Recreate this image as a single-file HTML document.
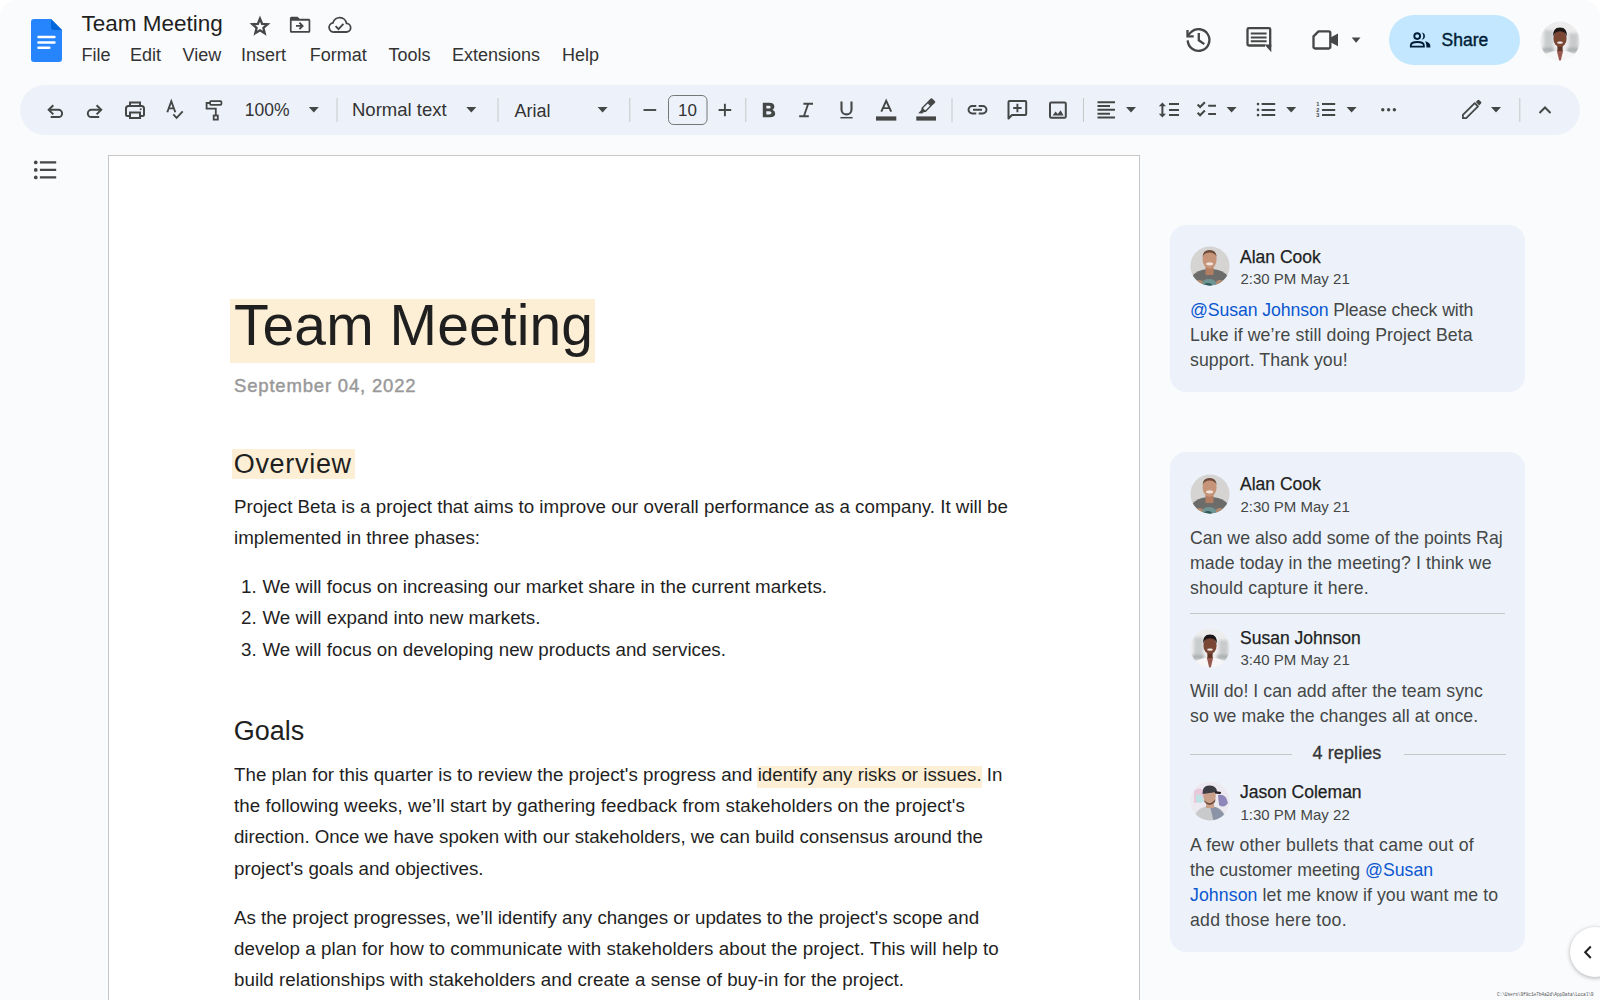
<!DOCTYPE html>
<html><head><meta charset="utf-8">
<style>
*{box-sizing:border-box;margin:0;padding:0}
html,body{width:1600px;height:1000px;overflow:hidden;background:#f9fbfd;font-family:"Liberation Sans",sans-serif;color:#1f1f1f}
.a{position:absolute;white-space:nowrap;line-height:1}
svg{position:absolute;overflow:visible}
.ic{fill:none;stroke:#444746;stroke-width:2}
.f{fill:#444746;stroke:none}
.menu{font-size:18px;top:45.5px;color:#333}
.tb{position:absolute;left:20px;top:85px;width:1560px;height:50px;border-radius:25px;background:#edf2fa}
.sep{position:absolute;width:1px;top:98px;height:24px;background:#c7c7c7}
.dd{position:absolute;width:0;height:0;border-left:5px solid transparent;border-right:5px solid transparent;border-top:5px solid #444746}
.page{position:absolute;left:108px;top:155px;width:1032px;height:900px;background:#fff;border:1px solid #c7c7c7}
.p{position:absolute;left:234px;font-size:18.75px;line-height:31.3px;white-space:nowrap;color:#1f1f1f}
.hl{position:absolute;background:#fdefd5}
.card{position:absolute;left:1170px;width:355px;background:#edf2fa;border-radius:16px}
.nm{font-size:17.5px;left:1240px;color:#1f1f1f;-webkit-text-stroke:0.25px #1f1f1f}
.tm{font-size:15px;left:1240.5px;color:#444746}
.cb{position:absolute;left:1190px;font-size:17.7px;line-height:25px;white-space:nowrap;color:#444746}
.mn{color:#0b57d0}
.av{position:absolute;left:1190px;width:40px;height:40px;border-radius:50%;overflow:hidden}
.div{position:absolute;height:1px;background:#c4c7c5}
</style></head><body>

<!-- Docs logo -->
<svg style="left:31px;top:18.5px" width="31" height="43" viewBox="0 0 31 43">
  <path d="M3 0H20L31 11V40A3 3 0 0 1 28 43H3A3 3 0 0 1 0 40V3A3 3 0 0 1 3 0Z" fill="#2684fc"/>
  <path d="M20 0L31 11H23A3 3 0 0 1 20 8Z" fill="#0066da"/>
  <rect x="6.3" y="16.7" width="18.3" height="2.5" rx="1" fill="#fff"/>
  <rect x="6.3" y="22.2" width="18.3" height="2.5" rx="1" fill="#fff"/>
  <rect x="6.3" y="27.6" width="13.2" height="2.5" rx="1" fill="#fff"/>
</svg>

<div class="a" style="left:81.5px;top:13.4px;font-size:22.5px">Team Meeting</div>

<div class="a menu" style="left:81.5px">File</div>
<div class="a menu" style="left:130px">Edit</div>
<div class="a menu" style="left:182.5px">View</div>
<div class="a menu" style="left:241px">Insert</div>
<div class="a menu" style="left:309.8px">Format</div>
<div class="a menu" style="left:388.5px">Tools</div>
<div class="a menu" style="left:452px">Extensions</div>
<div class="a menu" style="left:562px">Help</div>

<!-- toolbar -->
<div class="tb"></div>


<!-- ICON OVERLAY -->
<svg style="left:0;top:0" width="1600" height="1000" viewBox="0 0 1600 1000">
<g class="ic" stroke-linecap="butt" stroke-linejoin="miter">
  <!-- star -->
  <path d="M260 18.6 L262.1 23.8 L267.6 24.2 L263.4 27.8 L264.7 33.2 L260 30.3 L255.3 33.2 L256.6 27.8 L252.4 24.2 L257.9 23.8 Z" stroke-width="2.3" stroke-linejoin="miter" stroke-miterlimit="10"/>
  <!-- folder move -->
  <path d="M296 25.9 H302.3 M299.4 22.7 L302.6 25.9 L299.4 29.1" stroke-width="1.9"/>
  <!-- cloud done -->
  <path d="M334.5 32 H346.2 A4.3 4.3 0 0 0 346.5 23.4 A6.9 6.9 0 0 0 333 22.8 A4.6 4.6 0 0 0 334.5 32 Z" stroke-width="1.8"/>
  <path d="M335.6 26.1 L338.5 29.1 L343.4 23.9" stroke-width="1.9"/>
</g>
<g class="ic" stroke-width="1.8">
  <!-- undo -->
  <path d="M48.8 109.8 H58.5 A3.6 3.6 0 0 1 58.5 117 H50.7"/>
  <path d="M53.3 105.2 L48.7 109.8 L53.3 114.4"/>
  <!-- redo -->
  <path d="M101.1 109.8 H91.4 A3.6 3.6 0 0 0 91.4 117 H99.2"/>
  <path d="M96.6 105.2 L101.2 109.8 L96.6 114.4"/>
  <!-- print -->
  <path d="M130 106 V102.5 H140 V106" stroke-width="2"/>
  <path d="M129.5 116 H127.5 A1.5 1.5 0 0 1 126 114.5 V108.5 A2.5 2.5 0 0 1 128.5 106 H141.5 A2.5 2.5 0 0 1 144 108.5 V114.5 A1.5 1.5 0 0 1 142.5 116 H140.5" stroke-width="2"/>
  <rect x="130" y="112.5" width="10" height="5.5" stroke-width="2"/>
  <!-- spellcheck -->
  <path d="M167.3 112.2 L171.3 101.2 L175.3 112.2 M168.7 108.4 H173.9" stroke-width="1.9"/>
  <path d="M173.3 114.4 L176.6 117.8 L182.7 111.3" stroke-width="1.9"/>
  <!-- paint format -->
  <rect x="210.1" y="101.2" width="11.3" height="3.6" rx="0.8" stroke-width="1.8"/>
  <path d="M210.1 103 H206.6 V108.7 H215.8 V115" stroke-width="1.8"/>
  <rect x="213.7" y="115.5" width="4.1" height="4.1" stroke-width="1.8"/>
  <!-- minus / plus -->
  <path d="M643.5 110 H656.2" stroke-width="1.9"/>
  <path d="M718.6 110 H731.2 M724.9 103.7 V116.3" stroke-width="1.9"/>
  <!-- italic -->
  <path d="M803.4 103.8 H813 M799.2 116.3 H808.8 M808.2 103.8 L803.9 116.3" stroke-width="1.9"/>
  <!-- underline -->
  <path d="M841.5 101.5 V109.4 A5 5 0 0 0 851.5 109.4 V101.5" stroke-width="2.1"/>
  <path d="M840.4 117.7 H852.6" stroke-width="1.5"/>
  <!-- text color A -->
  <path d="M881.3 111.7 L886.2 100.9 L891.2 111.7 M882.9 108.1 H889.6" stroke-width="1.95"/>
  <!-- link -->
  <path d="M976.3 106 H972.3 A3.75 3.75 0 0 0 972.3 113.5 H976.3 M978.7 106 H982.7 A3.75 3.75 0 0 1 982.7 113.5 H978.7 M973 109.75 H982" stroke-width="2"/>
  <!-- comment add -->
  <path d="M1008.5 118.5 V102 A1 1 0 0 1 1009.5 101 H1025.2 A1 1 0 0 1 1026.2 102 V114 A1 1 0 0 1 1025.2 115 H1012 Z" stroke-width="2" stroke-linejoin="round"/>
  <path d="M1017.4 103.8 V112.2 M1013.2 108 H1021.6" stroke-width="1.9"/>
  <!-- image -->
  <rect x="1050" y="102.5" width="15.8" height="15.3" rx="1.3" stroke-width="2"/>
  <!-- align left -->
  <path d="M1097.5 102.2 H1115 M1097.5 106 H1110 M1097.5 109.8 H1115 M1097.5 113.7 H1110 M1097.5 117.6 H1115" stroke-width="2"/>
  <!-- line spacing -->
  <path d="M1162.4 105 V115" stroke-width="2"/>
  <path d="M1169 104.1 H1179 M1169 109.9 H1179 M1169 115.1 H1179" stroke-width="2"/>
  <!-- checklist -->
  <path d="M1197.6 104.6 L1200.1 107 L1204.9 102.2 M1197.6 112.8 L1200.1 115.3 L1204.9 110.5" stroke-width="2.1"/>
  <path d="M1208.2 105.7 H1216 M1208.2 113.9 H1216" stroke-width="2"/>
  <!-- bulleted -->
  <path d="M1261.6 104.1 H1275.2 M1261.6 109.9 H1275.2 M1261.6 115.1 H1275.2" stroke-width="2"/>
  <!-- numbered -->
  <path d="M1322 104.1 H1335.2 M1322 109.9 H1335.2 M1322 115.1 H1335.2" stroke-width="2"/>
  <!-- pencil -->
  <path d="M1462.9 118.2 V114.9 L1474.7 103.1 L1478 106.4 L1466.2 118.2 Z" stroke-width="1.8" stroke-linejoin="round"/>
  <!-- caret up -->
  <path d="M1539.5 113 L1545 107.5 L1550.5 113" stroke-width="2"/>
  <!-- history -->
  <path d="M1187.7 40.4 A10.85 10.85 0 1 0 1190.9 32.3 L1187.6 35.7" stroke-width="2.3"/>
  <path d="M1187.5 29.9 V36.3 H1193.7" stroke-width="2.3"/>
  <path d="M1198.8 33.1 V40.3 L1204.3 44.1" stroke-width="2.3"/>
  <!-- comments header -->
  <path d="M1265 45.5 H1248.8 A1.3 1.3 0 0 1 1247.5 44.2 V29.4 A1.3 1.3 0 0 1 1248.8 28.1 H1268.9 A1.3 1.3 0 0 1 1270.2 29.4 V47" stroke-width="2.3"/>
  <path d="M1250.8 33.6 H1266.6 M1250.8 37.4 H1266.6 M1250.8 41.2 H1266.6" stroke-width="2"/>
  <!-- video -->
  <path d="M1318.5 31.4 H1328.8 A1.5 1.5 0 0 1 1330.3 32.9 V47 A1.5 1.5 0 0 1 1328.8 48.5 H1315 A1.5 1.5 0 0 1 1313.5 47 V36.4 Z" stroke-width="2.3" stroke-linejoin="round"/>
  <!-- outline icon -->
  <path d="M39.9 162.4 H56.2 M39.9 169.9 H56.2 M39.9 177.4 H56.2" stroke-width="2.3"/>
</g>
<g class="f">
  <path fill-rule="evenodd" d="M291.4 16.7 H297.6 L299.6 18.8 H308.8 A1.5 1.5 0 0 1 310.3 20.3 V31.3 A1.5 1.5 0 0 1 308.8 32.8 H291.4 A1.5 1.5 0 0 1 289.9 31.3 V18.2 A1.5 1.5 0 0 1 291.4 16.7 Z M291.6 20.7 V31.1 H308.6 V20.7 Z"/>
  <!-- print dot -->
  <circle cx="140.7" cy="109.3" r="1"/>
  <!-- line spacing arrows -->
  <path d="M1158.8 106.2 L1162.4 102.4 L1166 106.2 Z M1158.8 113.8 L1162.4 117.6 L1166 113.8 Z"/>
  <!-- bullets -->
  <circle cx="1258" cy="104.1" r="1.3"/><circle cx="1258" cy="109.9" r="1.3"/><circle cx="1258" cy="115.1" r="1.3"/>
  <!-- numbers -->
  <text x="1316.3" y="106.2" font-family="Liberation Sans" font-weight="700" font-size="5.6">1</text>
  <text x="1316.3" y="111.9" font-family="Liberation Sans" font-weight="700" font-size="5.6">2</text>
  <text x="1316.3" y="117.4" font-family="Liberation Sans" font-weight="700" font-size="5.6">3</text>
  <!-- more -->
  <circle cx="1382.8" cy="109.8" r="1.7"/><circle cx="1388.6" cy="109.8" r="1.7"/><circle cx="1394.4" cy="109.8" r="1.7"/>
  <!-- bold -->
  <path fill-rule="evenodd" d="M762.8 102.8 H769.3 Q774.4 102.8 774.4 106.7 Q774.4 108.9 772.5 109.8 Q775.2 110.7 775.2 113.5 Q775.2 117.3 770 117.3 H762.8 Z M766.3 105.7 V108.6 H768.9 Q770.7 108.6 770.7 107.15 Q770.7 105.7 768.9 105.7 Z M766.3 111.3 V114.4 H769.4 Q771.5 114.4 771.5 112.85 Q771.5 111.3 769.4 111.3 Z"/>
  <!-- color bars -->
  <rect x="876" y="116.4" width="20.3" height="4.2"/>
  <rect x="916.3" y="116.4" width="19.7" height="4.2"/>
  <!-- highlighter -->
  <g transform="rotate(45 926.5 107)">
    <rect x="923.5" y="97" width="6" height="5.6" rx="1"/>
    <path d="M923.5 102.3 H929.5 V111 L928 113 H925 L923.5 111 Z M924.9 103.6 V110.3 H928.1 V103.6 Z" fill-rule="evenodd"/>
    <path d="M925 112.5 H928 V114.6 L925 117.2 Z"/>
  </g>
  <!-- image mountains -->
  <path d="M1052.6 115.5 L1055.6 111.6 L1057.8 114 L1060.6 110.2 L1063.6 115.5 Z"/>
  <!-- pencil cap -->
  <path d="M1475.8 102 L1477.6 100.2 Q1478.5 99.3 1479.4 100.2 L1481 101.8 Q1481.9 102.7 1481 103.6 L1479.2 105.4 Z"/>
  <!-- comment tail -->
  <path d="M1264.5 44.4 H1271.3 V52.3 Z"/>
  <!-- video lens -->
  <path d="M1330.5 37.5 L1338 33.6 V46.2 L1330.5 42.3 Z"/>
  <!-- outline dots -->
  <circle cx="35.75" cy="162.4" r="1.85"/><circle cx="35.75" cy="169.9" r="1.85"/><circle cx="35.75" cy="177.4" r="1.85"/>
  <!-- dropdowns -->
  <path d="M308.8 107 H318.8 L313.8 112.5 Z"/>
  <path d="M466.3 107 H476.3 L471.3 112.5 Z"/>
  <path d="M597.6 107 H607.6 L602.6 112.5 Z"/>
  <path d="M1126 107 H1136 L1131 112.5 Z"/>
  <path d="M1226.6 107 H1236.6 L1231.6 112.5 Z"/>
  <path d="M1286.2 107 H1296.2 L1291.2 112.5 Z"/>
  <path d="M1346.6 107 H1356.6 L1351.6 112.5 Z"/>
  <path d="M1491 107 H1501 L1496 112.5 Z"/>
  <path d="M1351.7 37.6 H1360.5 L1356.1 42.8 Z"/>
</g>
<!-- separators -->
<g fill="#c7c7c7">
  <rect x="336.5" y="98" width="1" height="24"/>
  <rect x="497.5" y="98" width="1" height="24"/>
  <rect x="629.3" y="98" width="1" height="24"/>
  <rect x="745.3" y="98" width="1" height="24"/>
  <rect x="951.5" y="98" width="1" height="24"/>
  <rect x="1083" y="98" width="1" height="24"/>
  <rect x="1519.3" y="98" width="1" height="24"/>
</g>
<!-- font size box -->
<rect x="668.5" y="95.5" width="38.5" height="29" rx="5" fill="none" stroke="#747775" stroke-width="1"/>
<!-- share button -->
<rect x="1389" y="15" width="131" height="50" rx="25" fill="#c2e7ff"/>
<g fill="none" stroke="#001d35" stroke-width="2">
  <circle cx="1417.2" cy="36.1" r="2.9" stroke-width="1.9"/>
  <path d="M1410.8 46.7 V45.4 Q1410.8 42 1417.35 42 Q1423.9 42 1423.9 45.4 V46.7 Z" stroke-width="1.8"/>
</g>
<g fill="#001d35">
  <path d="M1421.8 32.4 A3.75 3.75 0 0 1 1421.8 39.8 A5.2 5.2 0 0 0 1421.8 32.4 Z"/>
  <path d="M1425.1 41.3 Q1430.3 42.4 1430.3 45.8 V47.6 H1426.4 V45.8 Q1426.4 43.3 1425.1 41.3 Z"/>
</g>
<!-- collapse button -->
<circle cx="1595" cy="952" r="25" fill="#fff" style="filter:drop-shadow(0 1px 2px rgba(0,0,0,0.3))"/>
<path d="M1590.8 946.5 L1585.2 952.3 L1590.8 958" fill="none" stroke="#1f1f1f" stroke-width="2"/>
</svg>
<div class="a" style="left:244.7px;top:101.6px;font-size:17.5px;color:#333">100%</div>
<div class="a" style="left:352px;top:101px;font-size:18.5px;color:#333">Normal text</div>
<div class="a" style="left:514.5px;top:101.5px;font-size:18px;color:#333">Arial</div>
<div class="a" style="left:678px;top:102px;font-size:17px;color:#333">10</div>
<div class="a" style="left:1441.6px;top:31.5px;font-size:17.5px;font-weight:400;color:#001d35;-webkit-text-stroke:0.4px #001d35">Share</div>

<!-- page -->
<div class="page"></div>

<!-- doc content -->
<div class="hl" style="left:230.25px;top:299px;width:364.75px;height:64px"></div>
<div class="a" style="left:234px;top:296.5px;font-size:57px;letter-spacing:0.08px;color:#1f1f1f">Team Meeting</div>
<div class="a" style="left:234px;top:377.8px;font-size:18.5px;font-weight:400;color:#999;letter-spacing:0.82px;-webkit-text-stroke:0.45px #999;top:377.3px">September 04, 2022</div>

<div class="hl" style="left:231.5px;top:448.5px;width:123.5px;height:30.5px"></div>
<div class="a" style="left:233.7px;top:451.2px;font-size:27px;letter-spacing:0.7px">Overview</div>

<div class="p" style="top:491.1px">Project Beta is a project that aims to improve our overall performance as a company. It will be<br>implemented in three phases:</div>

<div class="p" style="top:571px;left:241px">1.<br>2.<br>3.</div>
<div class="p" style="top:571px;left:262.5px">We will focus on increasing our market share in the current markets.<br>We will expand into new markets.<br>We will focus on developing new products and services.</div>

<div class="a" style="left:233.7px;top:717.65px;font-size:27px">Goals</div>

<div class="hl" style="left:756.6px;top:765.5px;width:225.9px;height:22px"></div>
<div class="p" style="top:758.8px">The plan for this quarter is to review the project's progress and identify any risks or issues. In<br><span style="letter-spacing:0.045px">the following weeks, we’ll start by gathering feedback from stakeholders on the project's</span><br><span style="letter-spacing:-0.054px">direction. Once we have spoken with our stakeholders, we can build consensus around the</span><br>project's goals and objectives.</div>

<div class="p" style="top:901.8px"><span style="letter-spacing:-0.03px">As the project progresses, we’ll identify any changes or updates to the project's scope and</span><br><span style="letter-spacing:0.058px">develop a plan for how to communicate with stakeholders about the project. This will help to</span><br><span style="letter-spacing:0.037px">build relationships with stakeholders and create a sense of buy-in for the project.</span></div>

<!-- comments -->
<div class="card" style="top:225px;height:167px"></div>
<div class="card" style="top:452px;height:500px"></div>

<div class="a nm" style="top:248.6px">Alan Cook</div>
<div class="a tm" style="top:271px">2:30 PM May 21</div>
<div class="cb" style="top:298.2px"><span style="letter-spacing:-0.1px"><span class="mn">@Susan Johnson</span> Please check with</span><br><span style="letter-spacing:0.09px">Luke if we’re still doing Project Beta</span><br><span style="letter-spacing:0.09px">support. Thank you!</span></div>

<div class="a nm" style="top:476.1px">Alan Cook</div>
<div class="a tm" style="top:498.6px">2:30 PM May 21</div>
<div class="cb" style="top:525.6px">Can we also add some of the points Raj<br><span style="letter-spacing:0.1px">made today in the meeting? I think we</span><br><span style="letter-spacing:0.17px">should capture it here.</span></div>
<div class="div" style="left:1190px;top:612.5px;width:315px"></div>

<div class="a nm" style="top:630.3px">Susan Johnson</div>
<div class="a tm" style="top:652.4px">3:40 PM May 21</div>
<div class="cb" style="top:679px"><span style="letter-spacing:0.05px">Will do! I can add after the team sync</span><br><span style="letter-spacing:0.06px">so we make the changes all at once.</span></div>

<div class="div" style="left:1190px;top:754px;width:102px"></div>
<div class="div" style="left:1403.5px;top:754px;width:102px"></div>
<div class="a" style="left:1312.5px;top:744.4px;font-size:18px;letter-spacing:0.1px;color:#333;-webkit-text-stroke:0.3px #333">4 replies</div>

<div class="a nm" style="top:784.2px">Jason Coleman</div>
<div class="a tm" style="top:806.5px">1:30 PM May 22</div>
<div class="cb" style="top:833.2px"><span style="letter-spacing:0.21px">A few other bullets that came out of</span><br>the customer meeting <span class="mn">@Susan</span><br><span style="letter-spacing:0.09px"><span class="mn">Johnson</span> let me know if you want me to</span><br><span style="letter-spacing:0.23px">add those here too.</span></div>

<svg style="left:1190px;top:246px" width="40" height="40" viewBox="0 0 40 40">
<defs><clipPath id="ca246"><circle cx="20" cy="20" r="19.6"/></clipPath></defs>
<g clip-path="url(#ca246)">
<rect width="40" height="40" fill="#d5d4d2"/>
<ellipse cx="20" cy="37.5" rx="21" ry="14.5" fill="#6c6d6b"/>
<rect x="15.5" y="20" width="8" height="9" fill="#b47e63"/>
<ellipse cx="19.6" cy="13.5" rx="7" ry="9.2" fill="#c69478"/>
<path d="M12.6 11 Q12.8 4 19.6 4 Q26.4 4 26.6 11 Q25 6.5 19.6 6.5 Q14.2 6.5 12.6 11Z" fill="#6b4a3a"/>
<ellipse cx="19.6" cy="17.8" rx="3.5" ry="1.6" fill="#f2e4dc"/>
<ellipse cx="19" cy="38" rx="7.5" ry="5" fill="#6f9491"/>
<ellipse cx="18" cy="39.5" rx="4" ry="2.5" fill="#2e5b5e"/>
<ellipse cx="9" cy="37" rx="4" ry="3" fill="#b58a70"/>
<ellipse cx="30" cy="37" rx="4" ry="3" fill="#b58a70"/>
</g></svg><svg style="left:1190px;top:473.5px" width="40" height="40" viewBox="0 0 40 40">
<defs><clipPath id="ca473"><circle cx="20" cy="20" r="19.6"/></clipPath></defs>
<g clip-path="url(#ca473)">
<rect width="40" height="40" fill="#d5d4d2"/>
<ellipse cx="20" cy="37.5" rx="21" ry="14.5" fill="#6c6d6b"/>
<rect x="15.5" y="20" width="8" height="9" fill="#b47e63"/>
<ellipse cx="19.6" cy="13.5" rx="7" ry="9.2" fill="#c69478"/>
<path d="M12.6 11 Q12.8 4 19.6 4 Q26.4 4 26.6 11 Q25 6.5 19.6 6.5 Q14.2 6.5 12.6 11Z" fill="#6b4a3a"/>
<ellipse cx="19.6" cy="17.8" rx="3.5" ry="1.6" fill="#f2e4dc"/>
<ellipse cx="19" cy="38" rx="7.5" ry="5" fill="#6f9491"/>
<ellipse cx="18" cy="39.5" rx="4" ry="2.5" fill="#2e5b5e"/>
<ellipse cx="9" cy="37" rx="4" ry="3" fill="#b58a70"/>
<ellipse cx="30" cy="37" rx="4" ry="3" fill="#b58a70"/>
</g></svg><svg style="left:1190px;top:628px" width="40" height="40" viewBox="0 0 40 40">
<defs><clipPath id="csa"><circle cx="20" cy="20" r="19.6"/></clipPath><filter id="bsa" x="-20%" y="-20%" width="140%" height="140%"><feGaussianBlur stdDeviation="1.6"/></filter><filter id="bta"><feGaussianBlur stdDeviation="0.45"/></filter></defs>
<g clip-path="url(#csa)">
<rect width="40" height="40" fill="#ededee"/>
<g filter="url(#bsa)">
<rect x="4" y="9" width="9" height="23" fill="#c9cccd"/>
<rect x="29" y="12" width="9" height="20" fill="#c8cacb"/>
<rect x="2" y="27" width="12" height="4" fill="#a7adae"/>
<rect x="27" y="27" width="12" height="4" fill="#a7adae"/>
</g>
<g filter="url(#bta)">
<ellipse cx="20" cy="44.5" rx="22" ry="15" fill="#f6f6f6"/>
<path d="M16.8 29.5 L20 43 L23.2 29.5Z" fill="#97584e"/>
<rect x="17.4" y="22" width="5.2" height="8" fill="#5f3528"/>
<ellipse cx="20" cy="17.5" rx="6.6" ry="8.6" fill="#7a4636"/>
<path d="M13.3 16 Q12.2 6.5 20 6.5 Q27.8 6.5 26.7 16 Q25.8 10.5 20 10.3 Q14.2 10.5 13.3 16Z" fill="#1f1715"/>
<ellipse cx="20" cy="21.6" rx="2.9" ry="1.2" fill="#f1e8e4"/>
</g>
</g></svg><svg style="left:1190px;top:781px" width="40" height="40" viewBox="0 0 40 40">
<defs><clipPath id="cj"><circle cx="20" cy="20" r="19.6"/></clipPath></defs>
<g clip-path="url(#cj)">
<rect width="40" height="40" fill="#eceaf0"/>
<path d="M4 10 Q10 4 16 12 Q10 22 4 22Z" fill="#e8c9dc"/>
<path d="M6 14 Q12 12 14 20 Q9 24 6 20Z" fill="#bfe3e4"/>
<path d="M28 14 Q36 12 38 22 Q34 28 29 24Z" fill="#8e86b8"/>
<path d="M3 42 Q4 26 20 25 Q36 26 37 42Z" fill="#c9cacc"/>
<path d="M20 25 Q34 26 37 42 H24Z" fill="#8b93a6"/>
<rect x="16" y="19" width="8" height="8" fill="#c9a18a"/>
<ellipse cx="19.5" cy="15" rx="6.3" ry="7.8" fill="#caa08a"/>
<path d="M14 19 Q19.5 26 25.5 18 L25 21 Q19.5 27 14.5 21Z" fill="#6a4d40"/>
<path d="M12.5 13 Q12 4 20 4.5 Q27 5 27 11 L12.5 13Z" fill="#3d3e44"/>
<path d="M25 10 L31 11 Q31.5 13 29 13 L25 12.5Z" fill="#2a1e22"/>
</g></svg><svg style="left:1540px;top:20.7px" width="40" height="40" viewBox="0 0 40 40">
<defs><clipPath id="csb"><circle cx="20" cy="20" r="19.6"/></clipPath><filter id="bsb" x="-20%" y="-20%" width="140%" height="140%"><feGaussianBlur stdDeviation="1.6"/></filter><filter id="btb"><feGaussianBlur stdDeviation="0.45"/></filter></defs>
<g clip-path="url(#csb)">
<rect width="40" height="40" fill="#ededee"/>
<g filter="url(#bsb)">
<rect x="4" y="9" width="9" height="23" fill="#c9cccd"/>
<rect x="29" y="12" width="9" height="20" fill="#c8cacb"/>
<rect x="2" y="27" width="12" height="4" fill="#a7adae"/>
<rect x="27" y="27" width="12" height="4" fill="#a7adae"/>
</g>
<g filter="url(#btb)">
<ellipse cx="20" cy="44.5" rx="22" ry="15" fill="#f6f6f6"/>
<path d="M16.8 29.5 L20 43 L23.2 29.5Z" fill="#97584e"/>
<rect x="17.4" y="22" width="5.2" height="8" fill="#5f3528"/>
<ellipse cx="20" cy="17.5" rx="6.6" ry="8.6" fill="#7a4636"/>
<path d="M13.3 16 Q12.2 6.5 20 6.5 Q27.8 6.5 26.7 16 Q25.8 10.5 20 10.3 Q14.2 10.5 13.3 16Z" fill="#1f1715"/>
<ellipse cx="20" cy="21.6" rx="2.9" ry="1.2" fill="#f1e8e4"/>
</g>
</g></svg>
<div class="a" style="left:1497px;top:993px;font-size:4.6px;font-family:'Liberation Mono';color:#555;letter-spacing:-0.15px">C:\Users\9f8c1e7b4a2d\AppData\Local\9</div>
<svg style="left:0;top:0" width="16" height="16" viewBox="0 0 16 16"><path d="M0 0 H16 A16 16 0 0 0 0 16 Z" fill="#fff"/></svg>
<svg style="left:1584px;top:0" width="16" height="16" viewBox="0 0 16 16"><path d="M16 0 H0 A16 16 0 0 1 16 16 Z" fill="#fff"/></svg>
</body></html>
